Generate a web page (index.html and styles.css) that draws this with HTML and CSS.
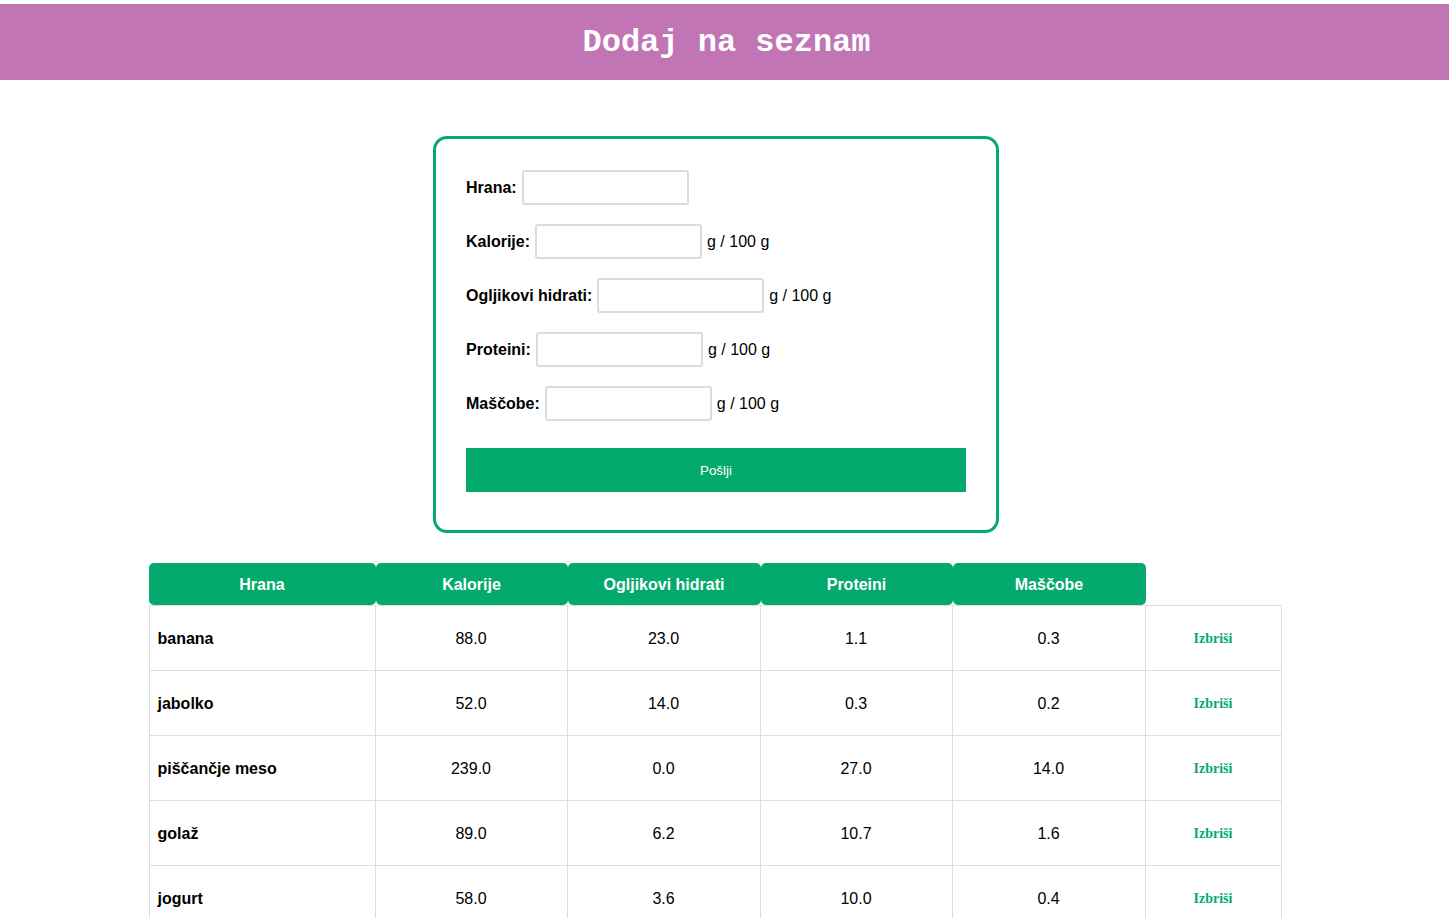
FILE: index.html
```html
<!DOCTYPE html>
<html lang="sl">
<head>
<meta charset="utf-8">
<title>Dodaj na seznam</title>
<link rel="stylesheet" href="styles.css">
</head>
<body>
<header class="topbar"><h1 class="title">Dodaj na seznam</h1></header>
<main class="main">
  <form class="card">
    <div class="row"><label class="lbl">Hrana:</label><input class="inp" type="text"></div>
    <div class="row"><label class="lbl">Kalorije:</label><input class="inp" type="text"><span class="unit">g / 100 g</span></div>
    <div class="row"><label class="lbl">Ogljikovi hidrati:</label><input class="inp" type="text"><span class="unit">g / 100 g</span></div>
    <div class="row"><label class="lbl">Proteini:</label><input class="inp" type="text"><span class="unit">g / 100 g</span></div>
    <div class="row"><label class="lbl">Maščobe:</label><input class="inp" type="text"><span class="unit">g / 100 g</span></div>
    <button class="send" type="button">Pošlji</button>
  </form>
  <table class="tbl">
    <thead>
      <tr>
        <th class="c1">Hrana</th>
        <th class="c2">Kalorije</th>
        <th class="c3">Ogljikovi hidrati</th>
        <th class="c4">Proteini</th>
        <th class="c5">Maščobe</th>
        <th class="c6 empty"></th>
      </tr>
    </thead>
    <tbody>
      <tr><td class="name">banana</td><td>88.0</td><td>23.0</td><td>1.1</td><td>0.3</td><td><button class="del" type="button">Izbriši</button></td></tr>
      <tr><td class="name">jabolko</td><td>52.0</td><td>14.0</td><td>0.3</td><td>0.2</td><td><button class="del" type="button">Izbriši</button></td></tr>
      <tr><td class="name">piščančje meso</td><td>239.0</td><td>0.0</td><td>27.0</td><td>14.0</td><td><button class="del" type="button">Izbriši</button></td></tr>
      <tr><td class="name">golaž</td><td>89.0</td><td>6.2</td><td>10.7</td><td>1.6</td><td><button class="del" type="button">Izbriši</button></td></tr>
      <tr><td class="name">jogurt</td><td>58.0</td><td>3.6</td><td>10.0</td><td>0.4</td><td><button class="del" type="button">Izbriši</button></td></tr>
    </tbody>
  </table>
</main>
</body>
</html>
```

FILE: styles.css
```css
* { box-sizing: border-box; }
html, body { margin: 0; padding: 0; background: #fff; }
body { font-family: "Liberation Sans", Arial, sans-serif; font-size: 16px; color: #000; }

.topbar {
  margin-top: 4px;
  height: 76px;
  background: #c175b4;
  display: flex;
  align-items: center;
  justify-content: center;
}
.title {
  margin: 0;
  font-family: "Liberation Mono", "Courier New", monospace;
  font-weight: bold;
  font-size: 32px;
  color: #fff;
  line-height: 1;
  padding-left: 4px;
  padding-top: 2px;
}

.main {
  width: 1432px;
  padding-top: 56px;
  display: flex;
  flex-direction: column;
  align-items: center;
}

.card {
  width: 566px;
  border: 3px solid #04aa6d;
  border-radius: 14px;
  padding: 31px 30px 38px;
  display: flex;
  flex-direction: column;
}
.row {
  display: flex;
  align-items: center;
  height: 35px;
  margin-bottom: 19px;
}
.row:last-of-type { margin-bottom: 27px; }
.lbl { font-weight: bold; font-size: 16px; }
.inp {
  width: 167px;
  height: 35px;
  margin: 0 5px 0 5px;
  border: 2px solid #dcdcdc;
  border-radius: 3px;
  background: #fff;
  padding: 0 6px;
  font-size: 14px;
}
.unit { font-size: 16px; }

.send {
  width: 500px;
  height: 44px;
  border: none;
  background: #04aa6d;
  color: #fff;
  font-family: "Liberation Sans", Arial, sans-serif;
  font-size: 13.33px;
  padding: 0;
}

.tbl {
  margin-top: 30px;
  margin-right: 2px;
  width: 1133px;
  table-layout: fixed;
  border-collapse: separate;
  border-spacing: 0;
}
.tbl th {
  height: 42px;
  padding: 1px 0 0;
  background: #04aa6d;
  color: #fff;
  font-weight: bold;
  font-size: 16px;
  border-radius: 5px;
}
.tbl th.empty { background: transparent; }
.c1 { width: 227px; }
.c2 { width: 192px; }
.c3 { width: 193px; }
.c4 { width: 192px; }
.c5 { width: 193px; }
.c6 { width: 136px; }

.tbl td {
  height: 65px;
  padding: 2px 8px 0;
  text-align: center;
  font-size: 16px;
  border-right: 1px solid #dddddd;
  border-bottom: 1px solid #dddddd;
}
.tbl td:first-child { border-left: 1px solid #dddddd; }
.tbl tbody tr:first-child td { border-top: 1px solid #dddddd; height: 66px; }
.tbl td.name { text-align: left; font-weight: bold; }

.del {
  display: inline-block;
  border: none;
  background: transparent;
  color: #04aa6d;
  font-family: "Liberation Serif", "Times New Roman", serif;
  font-weight: bold;
  font-size: 14px;
  line-height: 16px;
  padding: 0;
  vertical-align: middle;
  margin-top: -2px;
}
```
